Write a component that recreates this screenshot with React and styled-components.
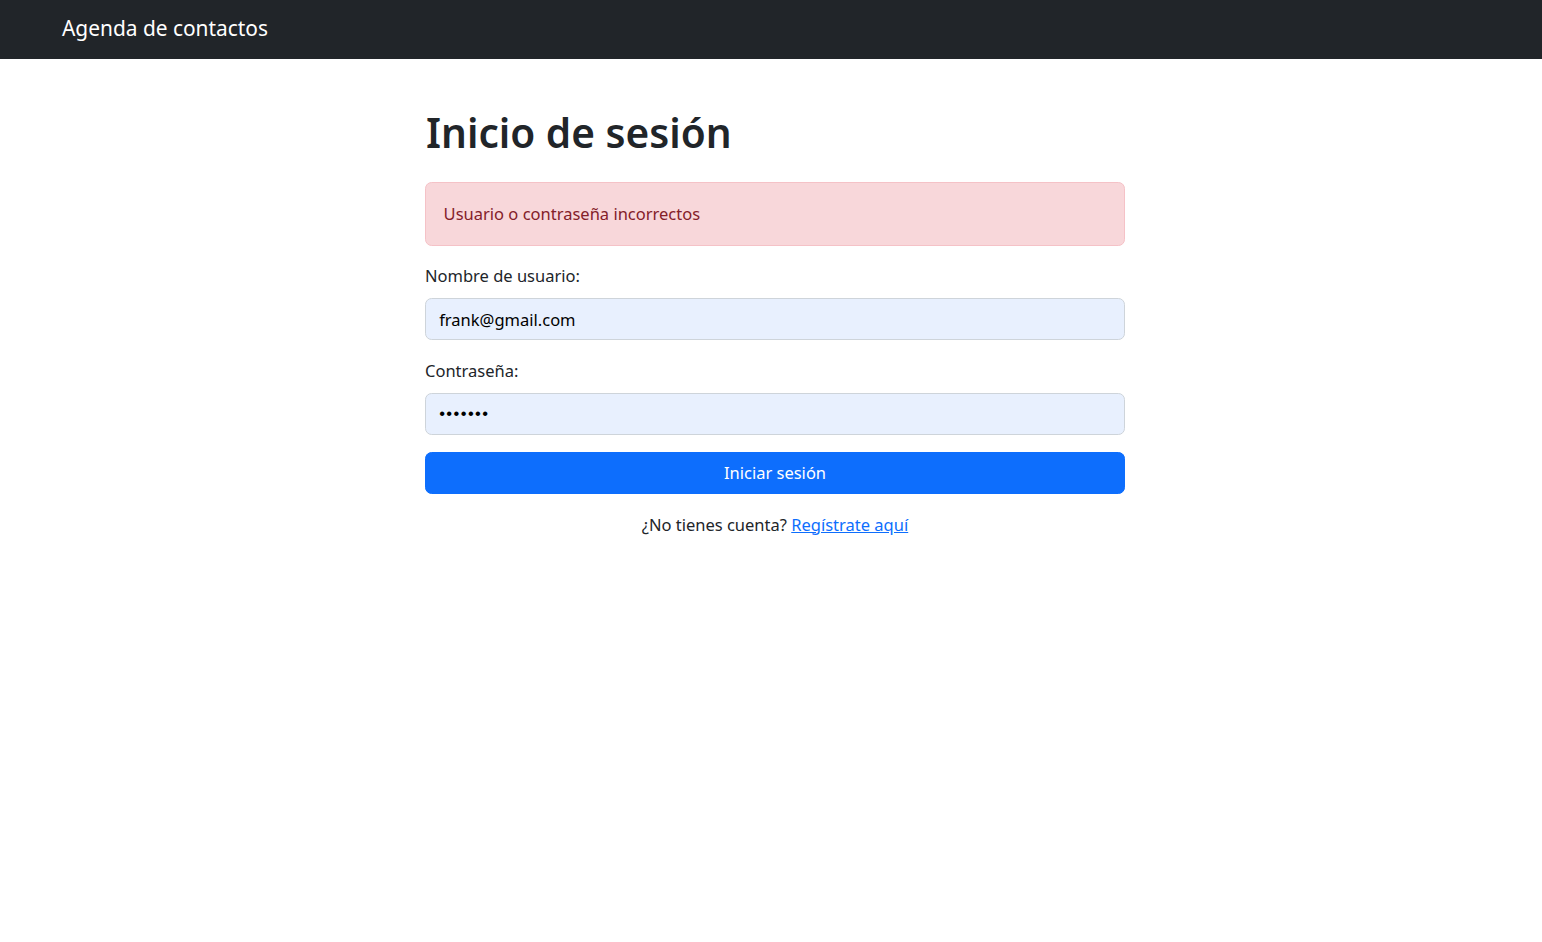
import React from "react";
import styled, { createGlobalStyle } from "styled-components";

const GlobalStyle = createGlobalStyle`
  html, body { margin: 0; padding: 0; background: #fff; }
  body {
    font-family: "Noto Sans", "Open Sans", sans-serif;
    font-size: 16.5px;
    line-height: 1.5;
    color: #212529;
  }
  * { box-sizing: border-box; }
`;

const Navbar = styled.nav`
  height: 59px;
  background: #212529;
  display: flex;
  align-items: center;
  padding-left: 62px;
`;

const Brand = styled.a`
  color: #fff;
  font-size: 20.9px;
  line-height: 33px;
  margin-top: -3px;
  text-decoration: none;
`;

const Main = styled.main`
  width: 700px;
  margin-left: calc(50% - 346px);
`;

const Title = styled.h1`
  margin: 47px 0 23px;
  padding-left: 1px;
  font-size: 40.6px;
  line-height: 53px;
  font-weight: 600;
  color: #212529;
`;

const Alert = styled.div`
  background: #f8d7da;
  border: 1px solid #f5c2c7;
  color: #842029;
  border-radius: 6.6px;
  padding: 17.6px;
  line-height: 26.4px;
  margin-bottom: 17.6px;
`;

const Field = styled.div`
  margin-bottom: 17.6px;
`;

const Label = styled.label`
  display: block;
  line-height: 26.4px;
  margin-bottom: 8.8px;
`;

const Input = styled.input`
  display: block;
  width: 100%;
  height: 41.8px;
  padding: 6.6px 13.2px;
  font-family: inherit;
  font-size: 16.5px;
  line-height: 26.4px;
  color: #000;
  background: #e8f0fe;
  border: 1px solid #ced4da;
  border-radius: 6.6px;
  outline: none;
  ${(p) => p.$password && `letter-spacing: 1.4px; font-family: "Liberation Sans", sans-serif;`}
`;

const Button = styled.button`
  display: block;
  width: 100%;
  height: 41.8px;
  background: #0d6efd;
  color: #fff;
  border: 1px solid #0d6efd;
  border-radius: 6.6px;
  font-family: inherit;
  font-size: 16.5px;
  line-height: 26.4px;
  cursor: pointer;
`;

const Footer = styled.p`
  margin: 17.6px 0 0;
  text-align: center;
  line-height: 26.4px;
`;

const Link = styled.a`
  color: #0d6efd;
  text-decoration: underline;
`;

export default function App() {
  return (
    <>
      <GlobalStyle />
      <Navbar>
        <Brand href="#">Agenda de contactos</Brand>
      </Navbar>
      <Main>
        <Title>Inicio de sesión</Title>
        <Alert>Usuario o contraseña incorrectos</Alert>
        <form onSubmit={(e) => e.preventDefault()}>
          <Field>
            <Label htmlFor="user">Nombre de usuario:</Label>
            <Input id="user" type="text" defaultValue="frank@gmail.com" />
          </Field>
          <Field>
            <Label htmlFor="pass">Contraseña:</Label>
            <Input id="pass" type="password" defaultValue="1234567" $password />
          </Field>
          <Button type="submit">Iniciar sesión</Button>
        </form>
        <Footer>
          ¿No tienes cuenta? <Link href="#">Regístrate aquí</Link>
        </Footer>
      </Main>
    </>
  );
}
